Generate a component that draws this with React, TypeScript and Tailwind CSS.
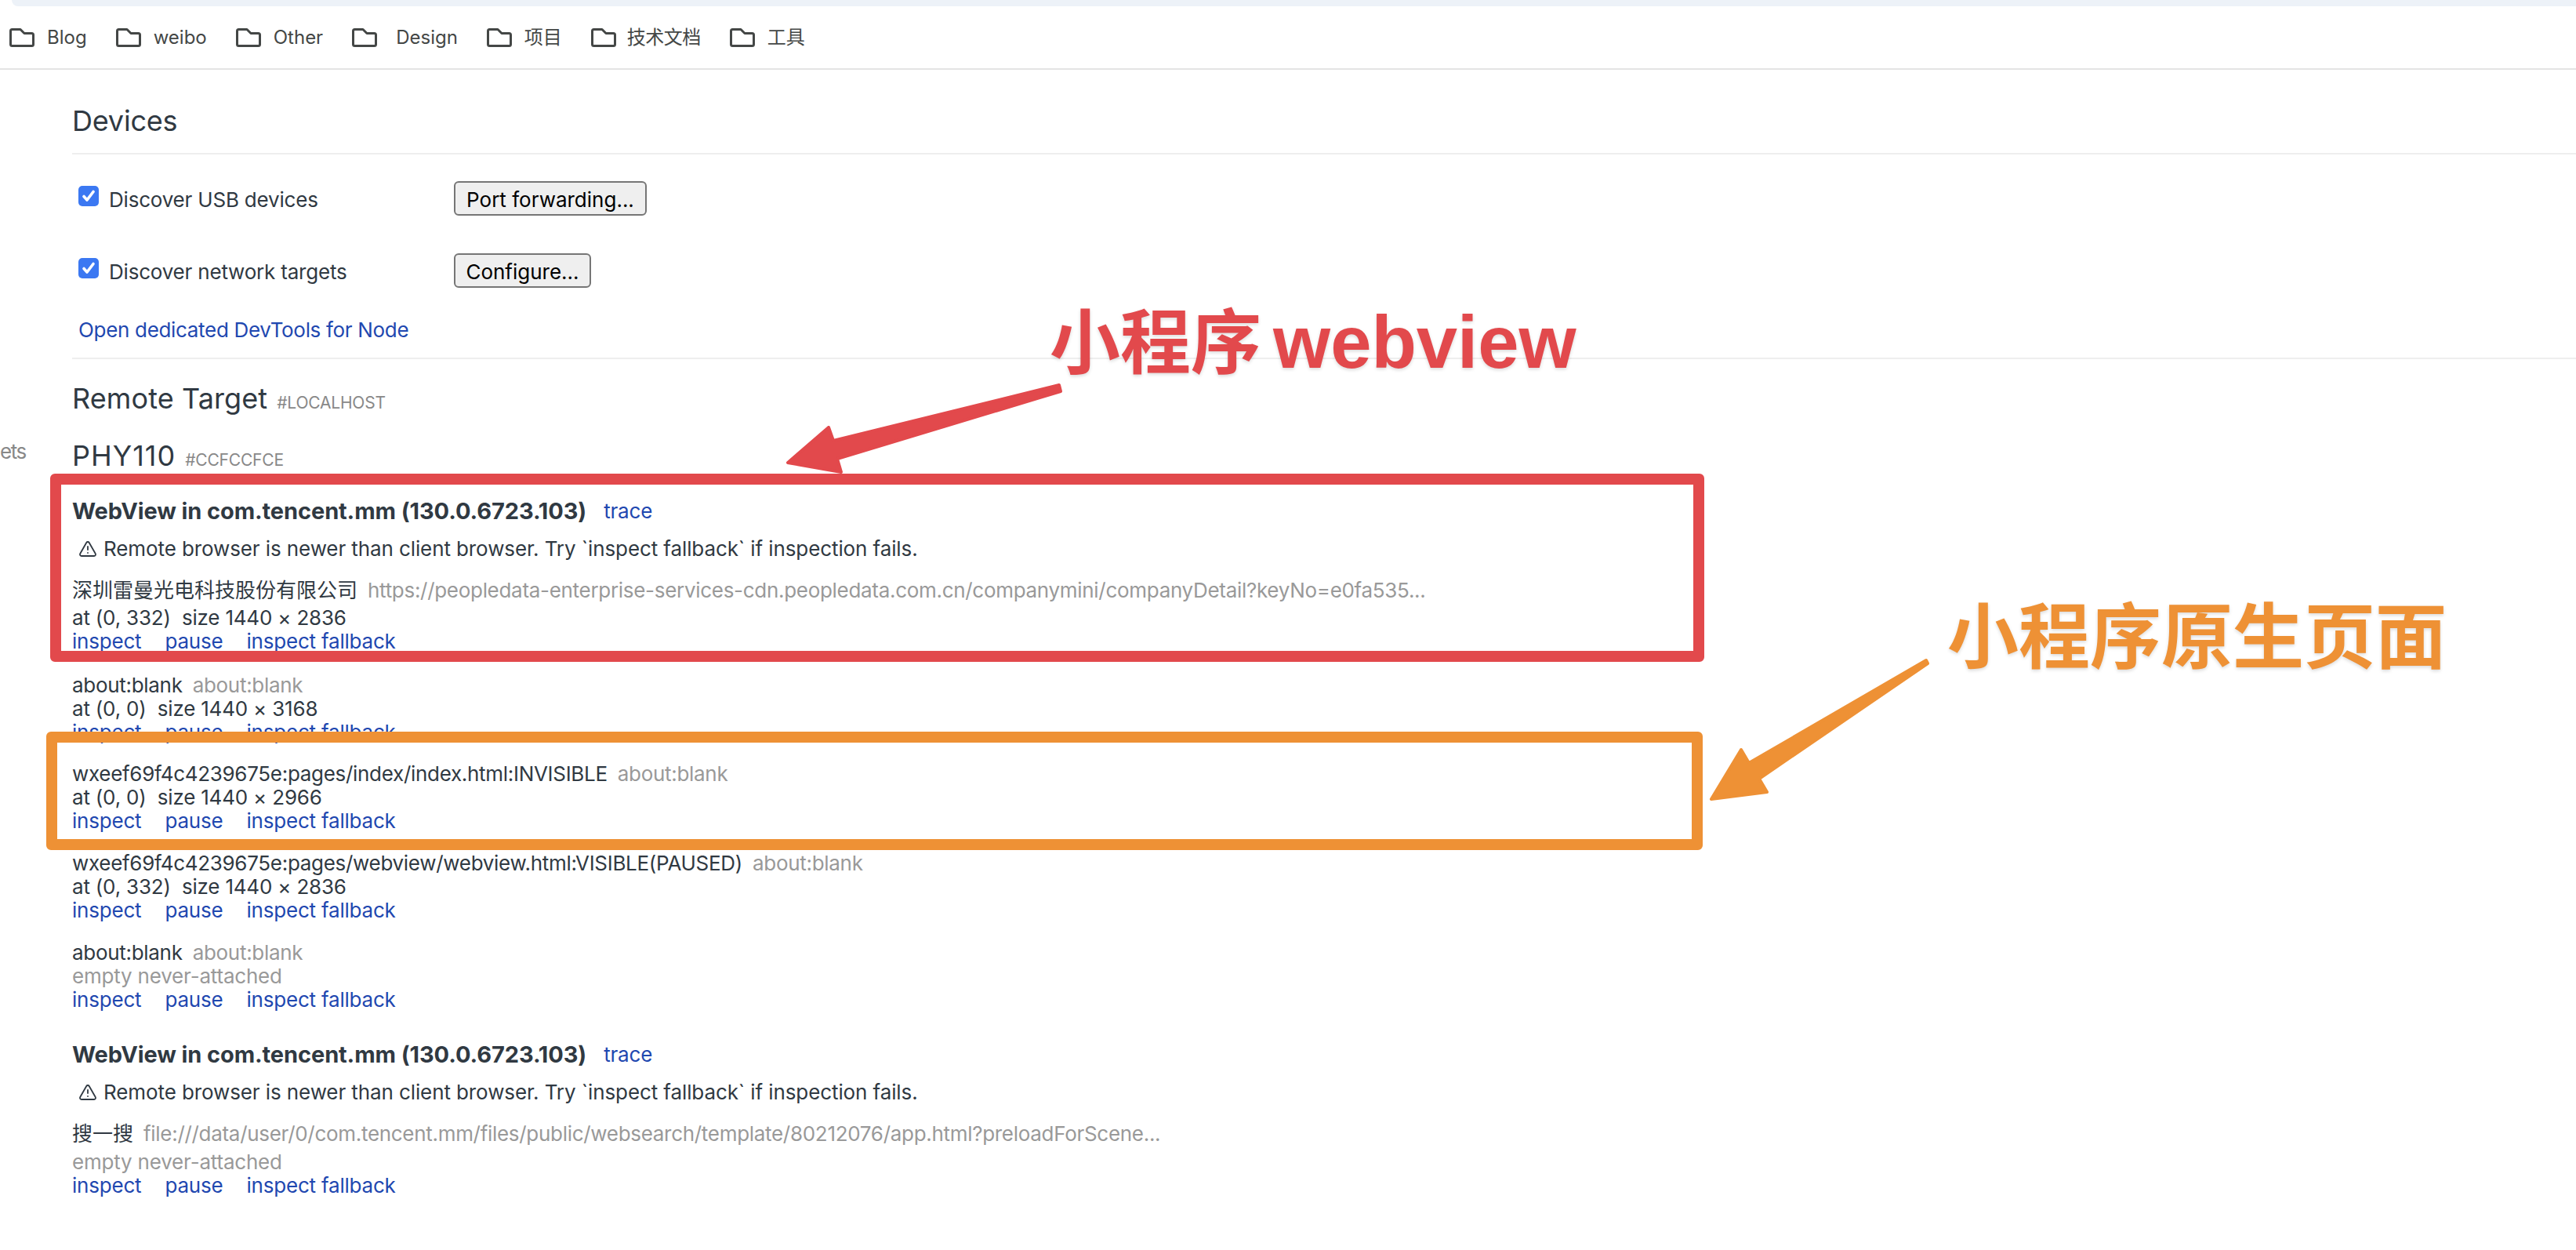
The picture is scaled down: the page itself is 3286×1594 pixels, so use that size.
import { TriangleAlert } from "lucide-react";

const FONT = "font-['Inter','Noto_Sans_CJK_SC',sans-serif]";

const bookmarks = [
  { name: "Blog", gap: "ml-4" },
  { name: "weibo", gap: "ml-4" },
  { name: "Other", gap: "ml-4" },
  { name: "Design", gap: "ml-[24px]" },
  { name: "项目", gap: "ml-4" },
  { name: "技术文档", gap: "ml-[14px] tracking-[-0.5px]" },
  { name: "工具", gap: "ml-4" },
];

function FolderIcon() {
  return (
    <svg width="32" height="24" viewBox="0 0 32 24" fill="none" stroke="#444746" strokeWidth="3" strokeLinejoin="round">
      <path d="M1.5 3.5 Q1.5 1.5 3.5 1.5 H14 L19 6.5 H28.5 Q30.5 6.5 30.5 8.5 V20.5 Q30.5 22.5 28.5 22.5 H3.5 Q1.5 22.5 1.5 20.5 Z" />
    </svg>
  );
}

function CheckMark() {
  return (
    <span className="mb-[6px] flex h-[26px] w-[26px] shrink-0 items-center justify-center rounded-[5px] bg-[#3b78f2]">
      <svg width="20" height="20" viewBox="0 0 20 20" fill="none" stroke="#fff" strokeWidth="3.6" strokeLinecap="round" strokeLinejoin="round">
        <path d="M4 10.5 L8 15 L16 4.5" />
      </svg>
    </span>
  );
}

function Actions({ className = "" }: { className?: string }) {
  return (
    <div className={`flex gap-[30px] leading-[30px] text-[#1f48b0] ${className}`}>
      <a>inspect</a>
      <a>pause</a>
      <a>inspect fallback</a>
    </div>
  );
}

function Heading({ className = "" }: { className?: string }) {
  return (
    <div className={`flex items-center leading-[30px] ${className}`}>
      <span className="text-[29px] font-bold tracking-[-0.1px]">WebView in com.tencent.mm (130.0.6723.103)</span>
      <a className="ml-[22px] text-[#1f48b0]">trace</a>
    </div>
  );
}

function Warning() {
  return (
    <div className="mt-[18px] flex items-center leading-[30px] tracking-[-0.1px]">
      <TriangleAlert className="ml-2 h-[24px] w-[24px]" strokeWidth={1.8} />
      <span className="ml-2">Remote browser is newer than client browser. Try `inspect fallback` if inspection fails.</span>
    </div>
  );
}

function Title({ name, url, className = "", cjk = false }: { name: string; url: string; className?: string; cjk?: boolean }) {
  return (
    <div className={`flex leading-[30px] tracking-[-0.3px] ${className}`}>
      <span className={cjk ? "tracking-normal" : ""}>{name}</span>
      <span className="ml-[13px] text-[#999]">{url}</span>
    </div>
  );
}

export default function App() {
  return (
    <div className={`relative h-[1594px] w-[3286px] overflow-hidden bg-white text-[26px] tracking-[-0.2px] text-[#303942] ${FONT}`}>
      <div className="ml-[15px] h-2 rounded-bl-lg bg-[#edf2f8]" />

      {/* Bookmarks */}
      <div className="flex h-[81px] items-center border-b-2 border-[#e4e4e4] pl-[12px] text-[24px] tracking-normal text-[#444746]">
        {bookmarks.map((b) => (
          <div key={b.name} className="mr-[37px] flex items-center">
            <FolderIcon />
            <span className={b.gap}>{b.name}</span>
          </div>
        ))}
      </div>

      <div className="flex">
        <aside className="w-[92px] shrink-0 pt-[467px] tracking-[-1.5px] text-[#888]">
          <div>ets</div>
        </aside>

        <main className="min-w-0 flex-1">
          {/* Devices */}
          <h2 className="border-b-2 border-[#eee] pb-5 pt-[44px] text-[36px] leading-[42px]">Devices</h2>

          <div className="mt-[34px] flex h-[44px] items-center pl-2">
            <CheckMark />
            <label className="ml-[13px] w-[440px] pt-[2px]">Discover USB devices</label>
            <button className="h-[44px] w-[246px] rounded-md border-2 border-[#767676] bg-[#efefef] pt-[2px] tracking-normal text-black">Port forwarding...</button>
          </div>
          <div className="mt-[48px] flex h-[44px] items-center pl-2">
            <CheckMark />
            <label className="ml-[13px] w-[440px] pt-[2px]">Discover network targets</label>
            <button className="h-[44px] w-[175px] rounded-md border-2 border-[#767676] bg-[#efefef] pt-[2px] tracking-normal text-black">Configure...</button>
          </div>

          <div className="border-b-2 border-[#eee] pb-[20px] pl-2 pt-[39px] leading-[30px] tracking-[-0.32px] text-[#1f48b0]">Open dedicated DevTools for Node</div>

          {/* Remote targets */}
          <div>
            <div className="mt-[29px] flex items-baseline text-[36px] leading-[42px] tracking-[0.1px]">
              Remote Target
              <span className="ml-[12px] text-[21px] uppercase tracking-[-0.2px] text-[#888]">#localhost</span>
            </div>
            <div className="mt-[25px] flex items-baseline text-[36px] leading-[42px] tracking-[1px]">
              PHY110
              <span className="ml-[12px] text-[21px] uppercase tracking-[-0.2px] text-[#888]">#ccfccfce</span>
            </div>

            <Heading className="mt-[29px]" />
            <Warning />
            <Title
              cjk
              className="mt-[23px]"
              name="深圳雷曼光电科技股份有限公司"
              url="https://peopledata-enterprise-services-cdn.peopledata.com.cn/companymini/companyDetail?keyNo=e0fa535..."
            />
            <div className="mt-[5px] leading-[30px]">at (0, 332)&nbsp; size 1440 × 2836</div>
            <Actions />

            <Title className="mt-[26px]" name="about:blank" url="about:blank" />
            <div className="leading-[30px]">at (0, 0)&nbsp; size 1440 × 3168</div>
            <Actions />

            <Title className="mt-[23px]" name="wxeef69f4c4239675e:pages/index/index.html:INVISIBLE" url="about:blank" />
            <div className="leading-[30px]">at (0, 0)&nbsp; size 1440 × 2966</div>
            <Actions />

            <Title className="mt-[24px]" name="wxeef69f4c4239675e:pages/webview/webview.html:VISIBLE(PAUSED)" url="about:blank" />
            <div className="leading-[30px]">at (0, 332)&nbsp; size 1440 × 2836</div>
            <Actions />

            <Title className="mt-[24px]" name="about:blank" url="about:blank" />
            <div className="leading-[30px] text-[#999]">empty never-attached</div>
            <Actions />

            <Heading className="mt-[40px]" />
            <Warning />
            <Title
              cjk
              className="mt-[23px]"
              name="搜一搜"
              url="file:///data/user/0/com.tencent.mm/files/public/websearch/template/80212076/app.html?preloadForScene..."
            />
            <div className="mt-[6px] leading-[30px] text-[#999]">empty never-attached</div>
            <Actions />
          </div>
        </main>
      </div>

      {/* Annotations drawn over the page */}
      <div className="absolute left-[64px] top-[604px] h-[240px] w-[2110px] rounded-md border-[14px] border-[#e2494c]" />
      <div className="absolute left-[59px] top-[933px] h-[151px] w-[2113px] rounded-md border-[14px] border-[#ee9135]" />
      <svg className="absolute left-0 top-0" width="3286" height="1594">
        <path
          d="M1351 491 L1063 562 L1057 545 L1005 590 L1073 602 L1068 585 L1353 499 Z"
          fill="#e2494c"
          stroke="#e2494c"
          strokeWidth="4"
          strokeLinejoin="round"
        />
        <path
          d="M2457 842 L2231 973 L2221 956 L2183 1019 L2254 1010 L2244 993 L2459 846 Z"
          fill="#ee9135"
          stroke="#ee9135"
          strokeWidth="4"
          strokeLinejoin="round"
        />
      </svg>
      <div className="absolute left-[1339px] top-[382px] whitespace-nowrap font-['Liberation_Sans','Noto_Sans_CJK_SC',sans-serif] text-[90px] font-bold leading-[110px] tracking-normal text-[#e2494c] [text-shadow:0_2px_4px_rgba(0,0,0,0.15)] [word-spacing:-10px]">
        小程序 <span className="text-[94px]">webview</span>
      </div>
      <div className="absolute left-[2484px] top-[759px] whitespace-nowrap font-['Liberation_Sans','Noto_Sans_CJK_SC',sans-serif] text-[91px] font-bold leading-[110px] tracking-normal text-[#ee9135] [text-shadow:0_2px_4px_rgba(0,0,0,0.15)]">
        小程序原生页面
      </div>
    </div>
  );
}
